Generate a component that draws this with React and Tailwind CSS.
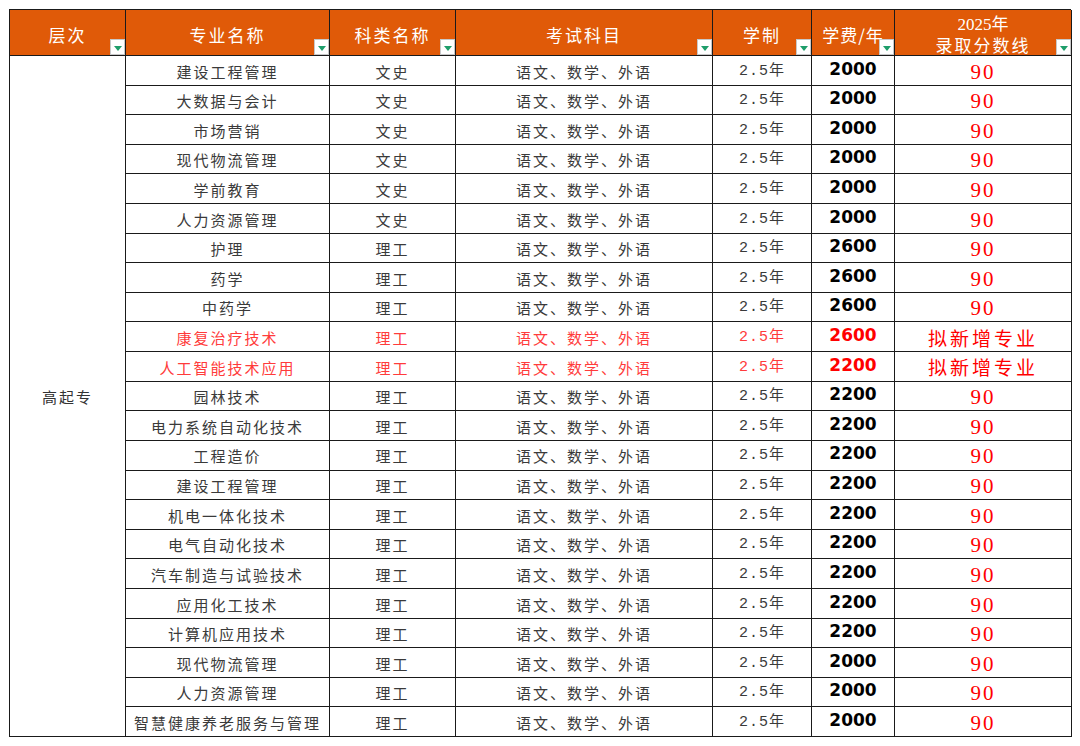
import React from "react";

const rows = [
  ["建设工程管理", "文史", "2000"],
  ["大数据与会计", "文史", "2000"],
  ["市场营销", "文史", "2000"],
  ["现代物流管理", "文史", "2000"],
  ["学前教育", "文史", "2000"],
  ["人力资源管理", "文史", "2000"],
  ["护理", "理工", "2600"],
  ["药学", "理工", "2600"],
  ["中药学", "理工", "2600"],
  ["康复治疗技术", "理工", "2600", true],
  ["人工智能技术应用", "理工", "2200", true],
  ["园林技术", "理工", "2200"],
  ["电力系统自动化技术", "理工", "2200"],
  ["工程造价", "理工", "2200"],
  ["建设工程管理", "理工", "2200"],
  ["机电一体化技术", "理工", "2200"],
  ["电气自动化技术", "理工", "2200"],
  ["汽车制造与试验技术", "理工", "2200"],
  ["应用化工技术", "理工", "2200"],
  ["计算机应用技术", "理工", "2200"],
  ["现代物流管理", "理工", "2000"],
  ["人力资源管理", "理工", "2000"],
  ["智慧健康养老服务与管理", "理工", "2000"],
];

function Filter() {
  return (
    <span className="absolute bottom-0 right-0 flex h-[16px] w-[15px] items-center justify-center border border-[#c8c8c8] bg-white">
      <span className="mt-[2px] h-0 w-0 border-l-[4px] border-r-[4px] border-t-[5px] border-l-transparent border-r-transparent border-t-[#1e9e6a]" />
    </span>
  );
}

function Head({ children }) {
  return (
    <div className="relative flex items-center justify-center border-b border-r border-[#1a1a1a] bg-[#e05a08] pt-[4px] font-['Noto_Sans_CJK_SC',sans-serif] text-[17px] tracking-[2px] text-white">
      {children}
      <Filter />
    </div>
  );
}

const cell =
  "flex items-center justify-center border-b border-r border-[#1a1a1a]";

export default function App() {
  return (
    <div className="h-[746px] w-[1080px] bg-white pl-[9px] pt-[9px]">
      <div className="grid h-[728px] w-[1062px] grid-cols-[116px_204px_126px_257px_99px_83px_177px] grid-rows-[46px_repeat(23,minmax(0,1fr))] border-l border-t border-[#1a1a1a]">
        <Head>层次</Head>
        <Head>专业名称</Head>
        <Head>科类名称</Head>
        <Head>考试科目</Head>
        <Head>学制</Head>
        <Head>
          <span className="tracking-[1px]">学费/年</span>
        </Head>
        <Head>
          <span className="flex flex-col items-center leading-[20px]">
            <span className="font-['Liberation_Serif','Noto_Sans_CJK_SC',serif] tracking-[0px]">
              2025年
            </span>
            <span>录取分数线</span>
          </span>
        </Head>

        <div
          className={`${cell} col-start-1 row-[2/span_23] pt-[2px] font-['Noto_Sans_CJK_SC',sans-serif] text-[15px] tracking-[2px] text-[#333]`}
        >
          高起专
        </div>

        {rows.map(([name, kind, fee, isNew], i) => {
          const txt = isNew ? "text-[#ff3b3b]" : "text-[#3a3a3a]";
          const zh = `${cell} pt-[3px] font-['Noto_Sans_CJK_SC',sans-serif] text-[15px] tracking-[2px] ${txt}`;
          return (
            <React.Fragment key={i}>
              <div className={`${zh} col-start-2`}>{name}</div>
              <div className={zh}>{kind}</div>
              <div className={zh}>语文、数学、外语</div>
              <div
                className={`${cell} pt-[3px] font-['Liberation_Mono','Noto_Sans_CJK_SC',monospace] text-[15px] tracking-[1px] ${txt}`}
              >
                2.5年
              </div>
              <div
                className={`${cell} pb-[2px] font-['DejaVu_Sans',sans-serif] text-[17px] font-bold ${
                  isNew ? "text-[#ff0000]" : "text-black"
                }`}
              >
                {fee}
              </div>
              {isNew ? (
                <div
                  className={`${cell} pt-[2px] font-['Noto_Sans_CJK_SC',sans-serif] text-[19px] tracking-[3px] text-[#ff0000]`}
                >
                  拟新增专业
                </div>
              ) : (
                <div
                  className={`${cell} pt-[4px] font-['Liberation_Serif',serif] text-[21px] tracking-[2px] text-[#ff0000]`}
                >
                  90
                </div>
              )}
            </React.Fragment>
          );
        })}
      </div>
    </div>
  );
}
